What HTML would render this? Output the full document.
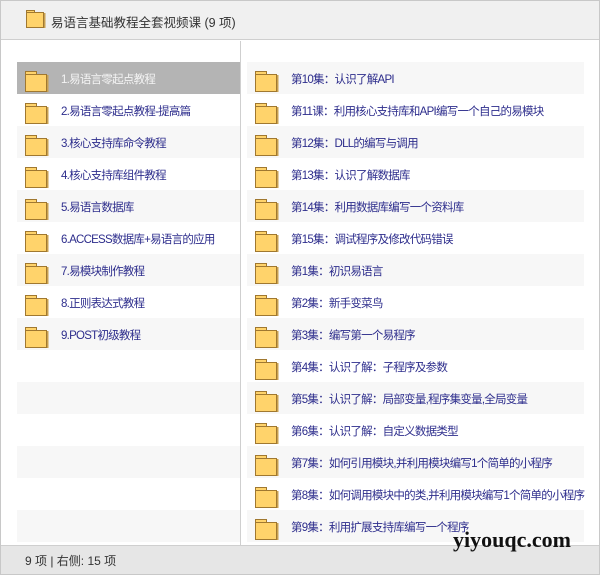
<!DOCTYPE html>
<html><head><meta charset="utf-8"><style>
*{margin:0;padding:0;box-sizing:border-box}
body{width:600px;height:575px;position:relative;background:#fff;font-family:"Liberation Sans","Noto Sans CJK SC",sans-serif;overflow:hidden}
.frame{position:absolute;left:0;top:0;width:600px;height:575px;border:1px solid #c8c8c8}
.hdr{position:absolute;left:1px;top:1px;width:598px;height:39px;background:#f0f0f0;border-bottom:1px solid #cfcfcf}
.hdr span{position:absolute;left:50px;top:11px;font-size:12.5px;color:#333}
.div{position:absolute;left:240px;top:41px;width:1px;height:504px;background:#cfcfcf}
.row{position:absolute;height:32px}
.row.a{background:#f7f7f7}
.row.sel{background:#b4b4b4}
.row.sel .t{color:#f4f4f4}
.t{position:absolute;top:9px;font-size:11.5px;letter-spacing:-0.75px;color:#2d2d8c;white-space:nowrap}
.ico{position:absolute;top:9px}
.ftr{position:absolute;left:1px;top:545px;width:598px;height:29px;background:#e6e6e6;border-top:1px solid #cfcfcf}
.ftr span{position:absolute;left:24px;top:6px;font-size:12px;color:#333}
.wm{position:absolute;left:453px;top:527px;font-family:"Liberation Serif",serif;font-weight:bold;font-size:22px;color:#111}
</style></head><body>
<div class="frame"></div>
<div class="hdr"><svg style="position:absolute;left:25px;top:9px" width="20" height="18"><path d="M0.5 2.5V0.5H8.5V2.5" fill="#ffd36b" stroke="#a07830"/><rect x="0.5" y="2.5" width="17" height="15" fill="#ffd36b" stroke="#a07830"/><rect x="18" y="3" width="1.5" height="15" fill="#c8a050"/></svg><span>易语言基础教程全套视频课 (9 项)</span></div>
<div class="div"></div>
<div id="L"></div><div id="R"></div>
<div class="ftr"><span>9 项 | 右侧: 15 项</span></div>
<div class="wm">yiyouqc.com</div>
<script>
const ico='<svg class="ico" style="left:8px" width="24" height="22"><path d="M0.5 3.5V0.5H11.5V3.5" fill="#ffd36b" stroke="#a07830"/><rect x="0.5" y="3.5" width="21" height="17" fill="#ffd36b" stroke="#a07830"/><rect x="22" y="4" width="1.5" height="17" fill="#c8a050"/></svg>';
const L=["1.易语言零起点教程","2.易语言零起点教程-提高篇","3.核心支持库命令教程","4.核心支持库组件教程","5.易语言数据库","6.ACCESS数据库+易语言的应用","7.易模块制作教程","8.正则表达式教程","9.POST初级教程"];
const R=["第10集：认识了解API","第11课：利用核心支持库和API编写一个自己的易模块","第12集：DLL的编写与调用","第13集：认识了解数据库","第14集：利用数据库编写一个资料库","第15集：调试程序及修改代码错误","第1集：初识易语言","第2集：新手变菜鸟","第3集：编写第一个易程序","第4集：认识了解：子程序及参数","第5集：认识了解：局部变量,程序集变量,全局变量","第6集：认识了解：自定义数据类型","第7集：如何引用模块,并利用模块编写1个简单的小程序","第8集：如何调用模块中的类,并利用模块编写1个简单的小程序","第9集：利用扩展支持库编写一个程序"];
let h='';
for(let i=0;i<15;i++){const y=62+32*i;let c=i==0?'sel':(i%2==0?'a':'');
h+=`<div class="row ${c}" style="left:17px;top:${y}px;width:223px">${i<9?ico+'<span class="t" style="left:44px">'+L[i]+'</span>':''}</div>`;}
document.getElementById('L').innerHTML=h;h='';
for(let i=0;i<15;i++){const y=62+32*i;let c=i%2==0?'a':'';
h+=`<div class="row ${c}" style="left:247px;top:${y}px;width:337px">${ico}<span class="t" style="left:44px">${R[i]}</span></div>`;}
document.getElementById('R').innerHTML=h;
</script>
</body></html>
